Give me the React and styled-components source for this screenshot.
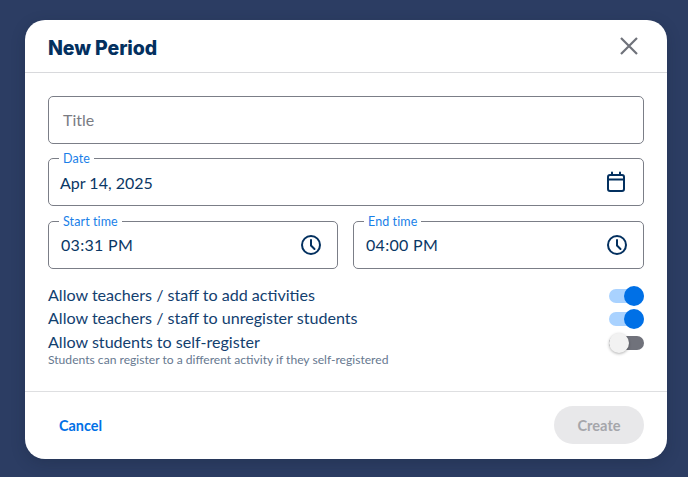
import { createGlobalStyle } from "styled-components";
import styled from "styled-components";

const GlobalStyle = createGlobalStyle`
  html, body {
    margin: 0;
    padding: 0;
    background: #2c3d63;
    font-family: "Lato", "Open Sans", sans-serif;
  }
  * {
    box-sizing: border-box;
  }
`;

const Backdrop = styled.div`
  width: 688px;
  height: 477px;
  padding: 20px 21px 18px 25px;
  background: #2c3d63;
  overflow: hidden;
`;

const Modal = styled.div`
  width: 642px;
  height: 439px;
  background: #fff;
  border-radius: 20px;
  box-shadow: 0 4px 14px rgba(20, 30, 50, 0.25);
  display: flex;
  flex-direction: column;
`;

const Header = styled.div`
  height: 53px;
  padding: 0 26px 0 23px;
  border-bottom: 1px solid #d8d9dc;
  display: flex;
  align-items: center;
  justify-content: space-between;
`;

const Title = styled.h2`
  margin: 4px 0 0;
  font-family: "Inter", sans-serif;
  font-size: 19.5px;
  font-weight: 800;
  letter-spacing: -0.1px;
  color: #03305f;
`;

const CloseButton = styled.button`
  width: 24px;
  height: 24px;
  padding: 0;
  border: none;
  background: transparent;
  color: #6f727a;
  display: flex;
  align-items: center;
  justify-content: center;
`;

const Body = styled.div`
  flex: 1;
  padding: 23px 23px 0;
  display: flex;
  flex-direction: column;
`;

const Fields = styled.div`
  display: flex;
  flex-direction: column;
  gap: 14px;
`;

const FieldRow = styled.div`
  margin-top: 1px;
  display: grid;
  grid-template-columns: 290px 291px;
  gap: 15px;
`;

const Field = styled.div`
  position: relative;
  height: 48px;
  padding: 0 ${(props) => props.$iconGap || 15}px 0 ${(props) => props.$inset || 12}px;
  border: 1px solid #7b7e87;
  border-radius: 5px;
  display: flex;
  align-items: center;
  justify-content: space-between;
  font-size: 16px;
  letter-spacing: ${(props) => props.$spacing || 0}px;
  color: #0a3765;
`;

const FieldText = styled.span`
  margin-bottom: ${(props) => (props.$lift ? "2px" : "0")};
`;

const Placeholder = styled.span`
  margin-bottom: 2px;
  padding-left: 2px;
  color: #7a7c83;
`;

const FloatLabel = styled.span`
  position: absolute;
  top: -8px;
  left: 10px;
  padding: 0 4px;
  background: #fff;
  font-size: 12.5px;
  line-height: 16px;
  letter-spacing: 0.1px;
  color: #1a7fe8;
`;

const Options = styled.div`
  margin-top: 14.75px;
  display: flex;
  flex-direction: column;
`;

const OptionRow = styled.div`
  height: 23.5px;
  display: flex;
  align-items: center;
  justify-content: space-between;
  font-size: 16.1px;
  color: #12406f;
`;

const OptionLabel = styled.span`
  margin-bottom: 3px;
`;

const Hint = styled.div`
  margin-top: -2.5px;
  font-size: 12.1px;
  line-height: 16px;
  color: #66788f;
`;

const Track = styled.div`
  position: relative;
  width: 35px;
  height: 14px;
  border-radius: 7px;
  background: ${(props) => (props.$on ? "#a9d2ff" : "#70727b")};
`;

const Thumb = styled.div`
  position: absolute;
  top: -3px;
  left: ${(props) => (props.$on ? "15px" : "0")};
  width: 20px;
  height: 20px;
  border-radius: 50%;
  background: ${(props) => (props.$on ? "#0070e6" : "#f2f2f2")};
  box-shadow: ${(props) => (props.$on ? "none" : "0 1px 3px rgba(0, 0, 0, 0.3)")};
`;

const Footer = styled.div`
  height: 68px;
  padding: 14px 23px 15px 34px;
  border-top: 1px solid #dedfe1;
  display: flex;
  align-items: center;
  justify-content: space-between;
`;

const CancelButton = styled.button`
  padding: 0;
  border: none;
  background: transparent;
  font-family: inherit;
  font-size: 14.4px;
  font-weight: 700;
  color: #0070e6;
`;

const CreateButton = styled.button`
  width: 90px;
  height: 38px;
  border: none;
  border-radius: 19px;
  background: #e8e8ea;
  font-family: inherit;
  font-size: 14.6px;
  font-weight: 700;
  color: #a5a6ab;
`;

function CloseIcon() {
  return (
    <svg width="20" height="20" viewBox="0 0 20 20" fill="none" stroke="currentColor" strokeWidth="2.2">
      <path d="M2 2 L18 18 M18 2 L2 18" />
    </svg>
  );
}

function CalendarIcon() {
  return (
    <svg width="20" height="22" viewBox="0 0 20 22" fill="none" stroke="#03305f" strokeWidth="2" strokeLinecap="round">
      <rect x="2" y="4" width="16" height="16" rx="2" />
      <path d="M2 8.5 H18 M6 1.5 V4 M14 1.5 V4" />
    </svg>
  );
}

function ClockIcon() {
  return (
    <svg width="22" height="22" viewBox="0 0 22 22" fill="none" stroke="#03305f" strokeWidth="2" strokeLinecap="round">
      <circle cx="11" cy="11" r="9" />
      <path d="M11 6 V11.5 L14.5 15" />
    </svg>
  );
}

function Toggle({ on }) {
  return (
    <Track $on={on}>
      <Thumb $on={on} />
    </Track>
  );
}

export default function App() {
  return (
    <Backdrop>
      <GlobalStyle />
      <Modal>
        <Header>
          <Title>New Period</Title>
          <CloseButton>
            <CloseIcon />
          </CloseButton>
        </Header>
        <Body>
          <Fields>
            <Field>
              <Placeholder>Title</Placeholder>
            </Field>
            <Field $inset={11} $iconGap={17}>
              <FloatLabel>Date</FloatLabel>
              <FieldText>Apr 14, 2025</FieldText>
              <CalendarIcon />
            </Field>
            <FieldRow>
              <Field $spacing={0.3}>
                <FloatLabel>Start time</FloatLabel>
                <FieldText $lift>03:31 PM</FieldText>
                <ClockIcon />
              </Field>
              <Field $spacing={0.3}>
                <FloatLabel>End time</FloatLabel>
                <FieldText $lift>04:00 PM</FieldText>
                <ClockIcon />
              </Field>
            </FieldRow>
          </Fields>
          <Options>
            <OptionRow>
              <OptionLabel>Allow teachers / staff to add activities</OptionLabel>
              <Toggle on />
            </OptionRow>
            <OptionRow>
              <OptionLabel>Allow teachers / staff to unregister students</OptionLabel>
              <Toggle on />
            </OptionRow>
            <OptionRow>
              <OptionLabel>Allow students to self-register</OptionLabel>
              <Toggle />
            </OptionRow>
            <Hint>Students can register to a different activity if they self-registered</Hint>
          </Options>
        </Body>
        <Footer>
          <CancelButton>Cancel</CancelButton>
          <CreateButton>Create</CreateButton>
        </Footer>
      </Modal>
    </Backdrop>
  );
}
